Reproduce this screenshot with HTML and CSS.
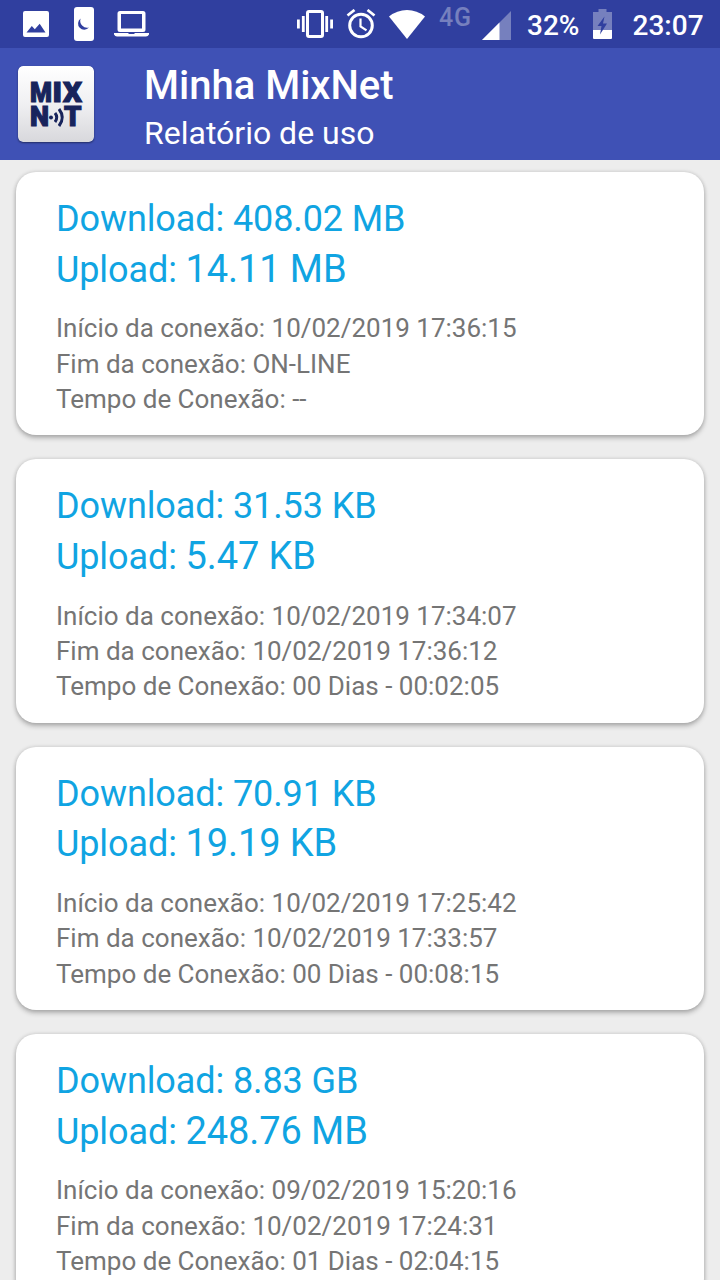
FILE: index.html
```html
<!DOCTYPE html>
<html lang="pt-BR">
<head>
<meta charset="utf-8">
<title>Minha MixNet</title>
<link rel="stylesheet" href="styles.css">
</head>
<body>
<div class="status">
  <div class="notifications">
    <svg width="26" height="26" viewBox="0 0 26 26"><path fill="#fff" fill-rule="evenodd" d="M2 0h22a2 2 0 0 1 2 2v22a2 2 0 0 1-2 2H2a2 2 0 0 1-2-2V2A2 2 0 0 1 2 0zM3.500 21.500h19L16.700 12.700l-4.900 5.600-3-3.300z"/></svg>
    <svg class="phone" width="20" height="34" viewBox="0 0 20 34"><rect width="20" height="34" rx="3" fill="#fff"/><path fill="#303f9f" d="M6.600 11.500A6.200 6.200 0 1 0 15 20.500 7 7 0 0 1 6.600 11.500z"/></svg>
    <svg class="laptop" width="35" height="26" viewBox="0 0 35 26"><path fill="#fff" fill-rule="evenodd" d="M6 0h23a2.500 2.500 0 0 1 2.500 2.500v16A2.500 2.500 0 0 1 29 21H6a2.500 2.500 0 0 1-2.500-2.500v-16A2.500 2.500 0 0 1 6 0zm1 3v14.500h21V3zM0 22h14l1 1h5l1-1h14v1.500Q34 25.500 32 25.500H3Q1 25.500 0 23.500z"/></svg>
  </div>
  <div class="system">
    <svg width="36" height="28" viewBox="0 0 36 28"><rect x="10.500" y="1.500" width="15" height="25" rx="1.500" fill="none" stroke="#fff" stroke-width="3"/><path stroke="#fff" stroke-width="2.800" d="M6.300 6v16M29.700 6v16M1.400 9.500v9M34.600 9.500v9"/></svg>
    <svg class="alarm" width="30" height="30" viewBox="0 0 30 30"><g fill="none" stroke="#fff"><circle cx="15" cy="16.500" r="11.300" stroke-width="3"/><path stroke-width="2.800" d="M1.500 6.500l7-5.500M28.500 6.500l-7-5.500"/><path stroke-width="2.200" d="M14.500 9.500v7.800l6 4"/></g></svg>
    <svg class="wifi" width="36" height="29" viewBox="0 0 36 29"><path fill="#fff" d="M0 6.500Q8 0 18 0t18 6.500L18 29z"/></svg>
    <span class="network">4G</span>
    <svg class="signal" width="29" height="29" viewBox="0 0 29 29"><path fill="#7680be" d="M29 0v29H0z"/><path fill="#fff" d="M17.500 11.500V29H0z"/></svg>
    <span class="percent">32%</span>
    <svg class="battery" width="19" height="30" viewBox="0 0 19 30"><path fill="#7680be" d="M5.500 0h8v3H19v18H0V3h5.500z"/><path fill="#fff" d="M0 21h19v8q0 1-1 1H1q-1 0-1-1z"/><path fill="#303f9f" d="M11.500 7.500L4.500 17h4l-1.500 8.500 7-11h-4z"/></svg>
    <span class="clock">23:07</span>
  </div>
</div>
<header class="appbar">
  <svg class="logo" width="76" height="76" viewBox="0 0 76 76">
    <defs><linearGradient id="tile" x1="0" y1="0" x2="0" y2="1"><stop offset="0" stop-color="#fff"/><stop offset=".5" stop-color="#f0f0f2"/><stop offset="1" stop-color="#d8d8dc"/></linearGradient></defs>
    <rect width="76" height="76" rx="5" fill="url(#tile)"/>
    <g class="wordmark">
      <text x="12" y="35.500" textLength="22" lengthAdjust="spacingAndGlyphs">M</text>
      <text x="34.500" y="35.500" textLength="9.500" lengthAdjust="spacingAndGlyphs">I</text>
      <text x="45" y="35.500" textLength="19" lengthAdjust="spacingAndGlyphs">X</text>
      <text x="12" y="60" textLength="19" lengthAdjust="spacingAndGlyphs">N</text>
      <text x="46" y="60" textLength="17.500" lengthAdjust="spacingAndGlyphs">T</text>
    </g>
    <circle cx="33" cy="51.500" r="2" fill="#18245c"/>
    <path d="M37 47q3.500 4.500 0 9M41 43q6.500 8.500 0 17" fill="none" stroke="#18245c" stroke-width="3"/>
  </svg>
  <div class="titles">
    <h1>Minha MixNet</h1>
    <p>Relatório de uso</p>
  </div>
</header>
<main class="reports">
  <section class="card">
    <div class="usage"><p>Download: 408.02 MB</p><p>Upload: <span class="sent">14.11 MB</span></p></div>
    <div class="details"><p>Início da conexão: 10/02/2019 17:36:15</p><p>Fim da conexão: ON-LINE</p><p>Tempo de Conexão: --</p></div>
  </section>
  <section class="card">
    <div class="usage"><p>Download: 31.53 KB</p><p>Upload: <span class="sent">5.47 KB</span></p></div>
    <div class="details"><p>Início da conexão: 10/02/2019 17:34:07</p><p>Fim da conexão: 10/02/2019 17:36:12</p><p>Tempo de Conexão: 00 Dias - 00:02:05</p></div>
  </section>
  <section class="card">
    <div class="usage"><p>Download: 70.91 KB</p><p>Upload: <span class="sent">19.19 KB</span></p></div>
    <div class="details"><p>Início da conexão: 10/02/2019 17:25:42</p><p>Fim da conexão: 10/02/2019 17:33:57</p><p>Tempo de Conexão: 00 Dias - 00:08:15</p></div>
  </section>
  <section class="card">
    <div class="usage"><p>Download: 8.83 GB</p><p>Upload: <span class="sent">248.76 MB</span></p></div>
    <div class="details"><p>Início da conexão: 09/02/2019 15:20:16</p><p>Fim da conexão: 10/02/2019 17:24:31</p><p>Tempo de Conexão: 01 Dias - 02:04:15</p></div>
  </section>
</main>
</body>
</html>
```
FILE: styles.css
```css
* { box-sizing: border-box; }
body {
  margin: 0;
  height: 1280px;
  overflow: hidden;
  display: flex;
  flex-direction: column;
  background: #ededed;
  font-family: Roboto, "Liberation Sans", sans-serif;
}
p, h1 { margin: 0; white-space: nowrap; }
svg { display: block; flex: none; }
.status {
  flex: none;
  height: 48px;
  padding: 0 16px 0 23px;
  display: flex;
  justify-content: space-between;
  align-items: center;
  background: #303f9f;
  color: #fff;
  font-size: 28px;
  font-weight: 500;
}
.notifications, .system { display: flex; align-items: center; height: 48px; }
.system { width: 407px; }
.phone { margin-left: 25px; }
.laptop { margin-left: 20px; }
.alarm { margin-left: 13px; }
.wifi { margin-left: 13px; }
.network {
  width: 34px;
  margin: 0 9px 12px 14px;
  color: #7680be;
  font-size: 25px;
  letter-spacing: .7px;
  line-height: 30px;
}
.signal { margin-top: 2px; }
.percent { width: 52px; margin-left: 16px; padding-top: 2px; }
.battery { margin-left: 14px; }
.clock { margin-left: 20.5px; padding-top: 2px; }
.appbar {
  flex: none;
  height: 112px;
  padding: 0 18px;
  display: flex;
  align-items: center;
  gap: 50px;
  background: #3f51b5;
  color: #fff;
}
.logo { border-radius: 5px; box-shadow: 0 1px 2px rgba(0, 0, 0, .45); }
.titles { padding-top: 8px; }
.wordmark {
  font: 900 27.500px Roboto, "Liberation Sans", sans-serif;
  fill: #18245c;
  stroke: #18245c;
  stroke-width: 1.1px;
}
.titles h1 { font-size: 40px; font-weight: 500; line-height: 50px; }
.titles p { font-size: 32px; line-height: 44px; }
.reports {
  display: flex;
  flex-direction: column;
  gap: 24px;
  padding: 12px 16px 0;
}
.card {
  flex: none;
  height: 263.4px;
  padding: 22px 40px 0;
  border-radius: 20px;
  background: #fff;
  box-shadow: 0 3px 5px rgba(0, 0, 0, .25), 0 0 4px rgba(0, 0, 0, .14);
}
.usage { color: #10a4e2; font-size: 36px; line-height: 50.5px; letter-spacing: -.1px; }
.usage p { height: 50.5px; }
.sent { font-size: 38px; line-height: 1; }
.details { margin-top: 16.2px; color: #757575; font-size: 26px; line-height: 35.4px; }
```
